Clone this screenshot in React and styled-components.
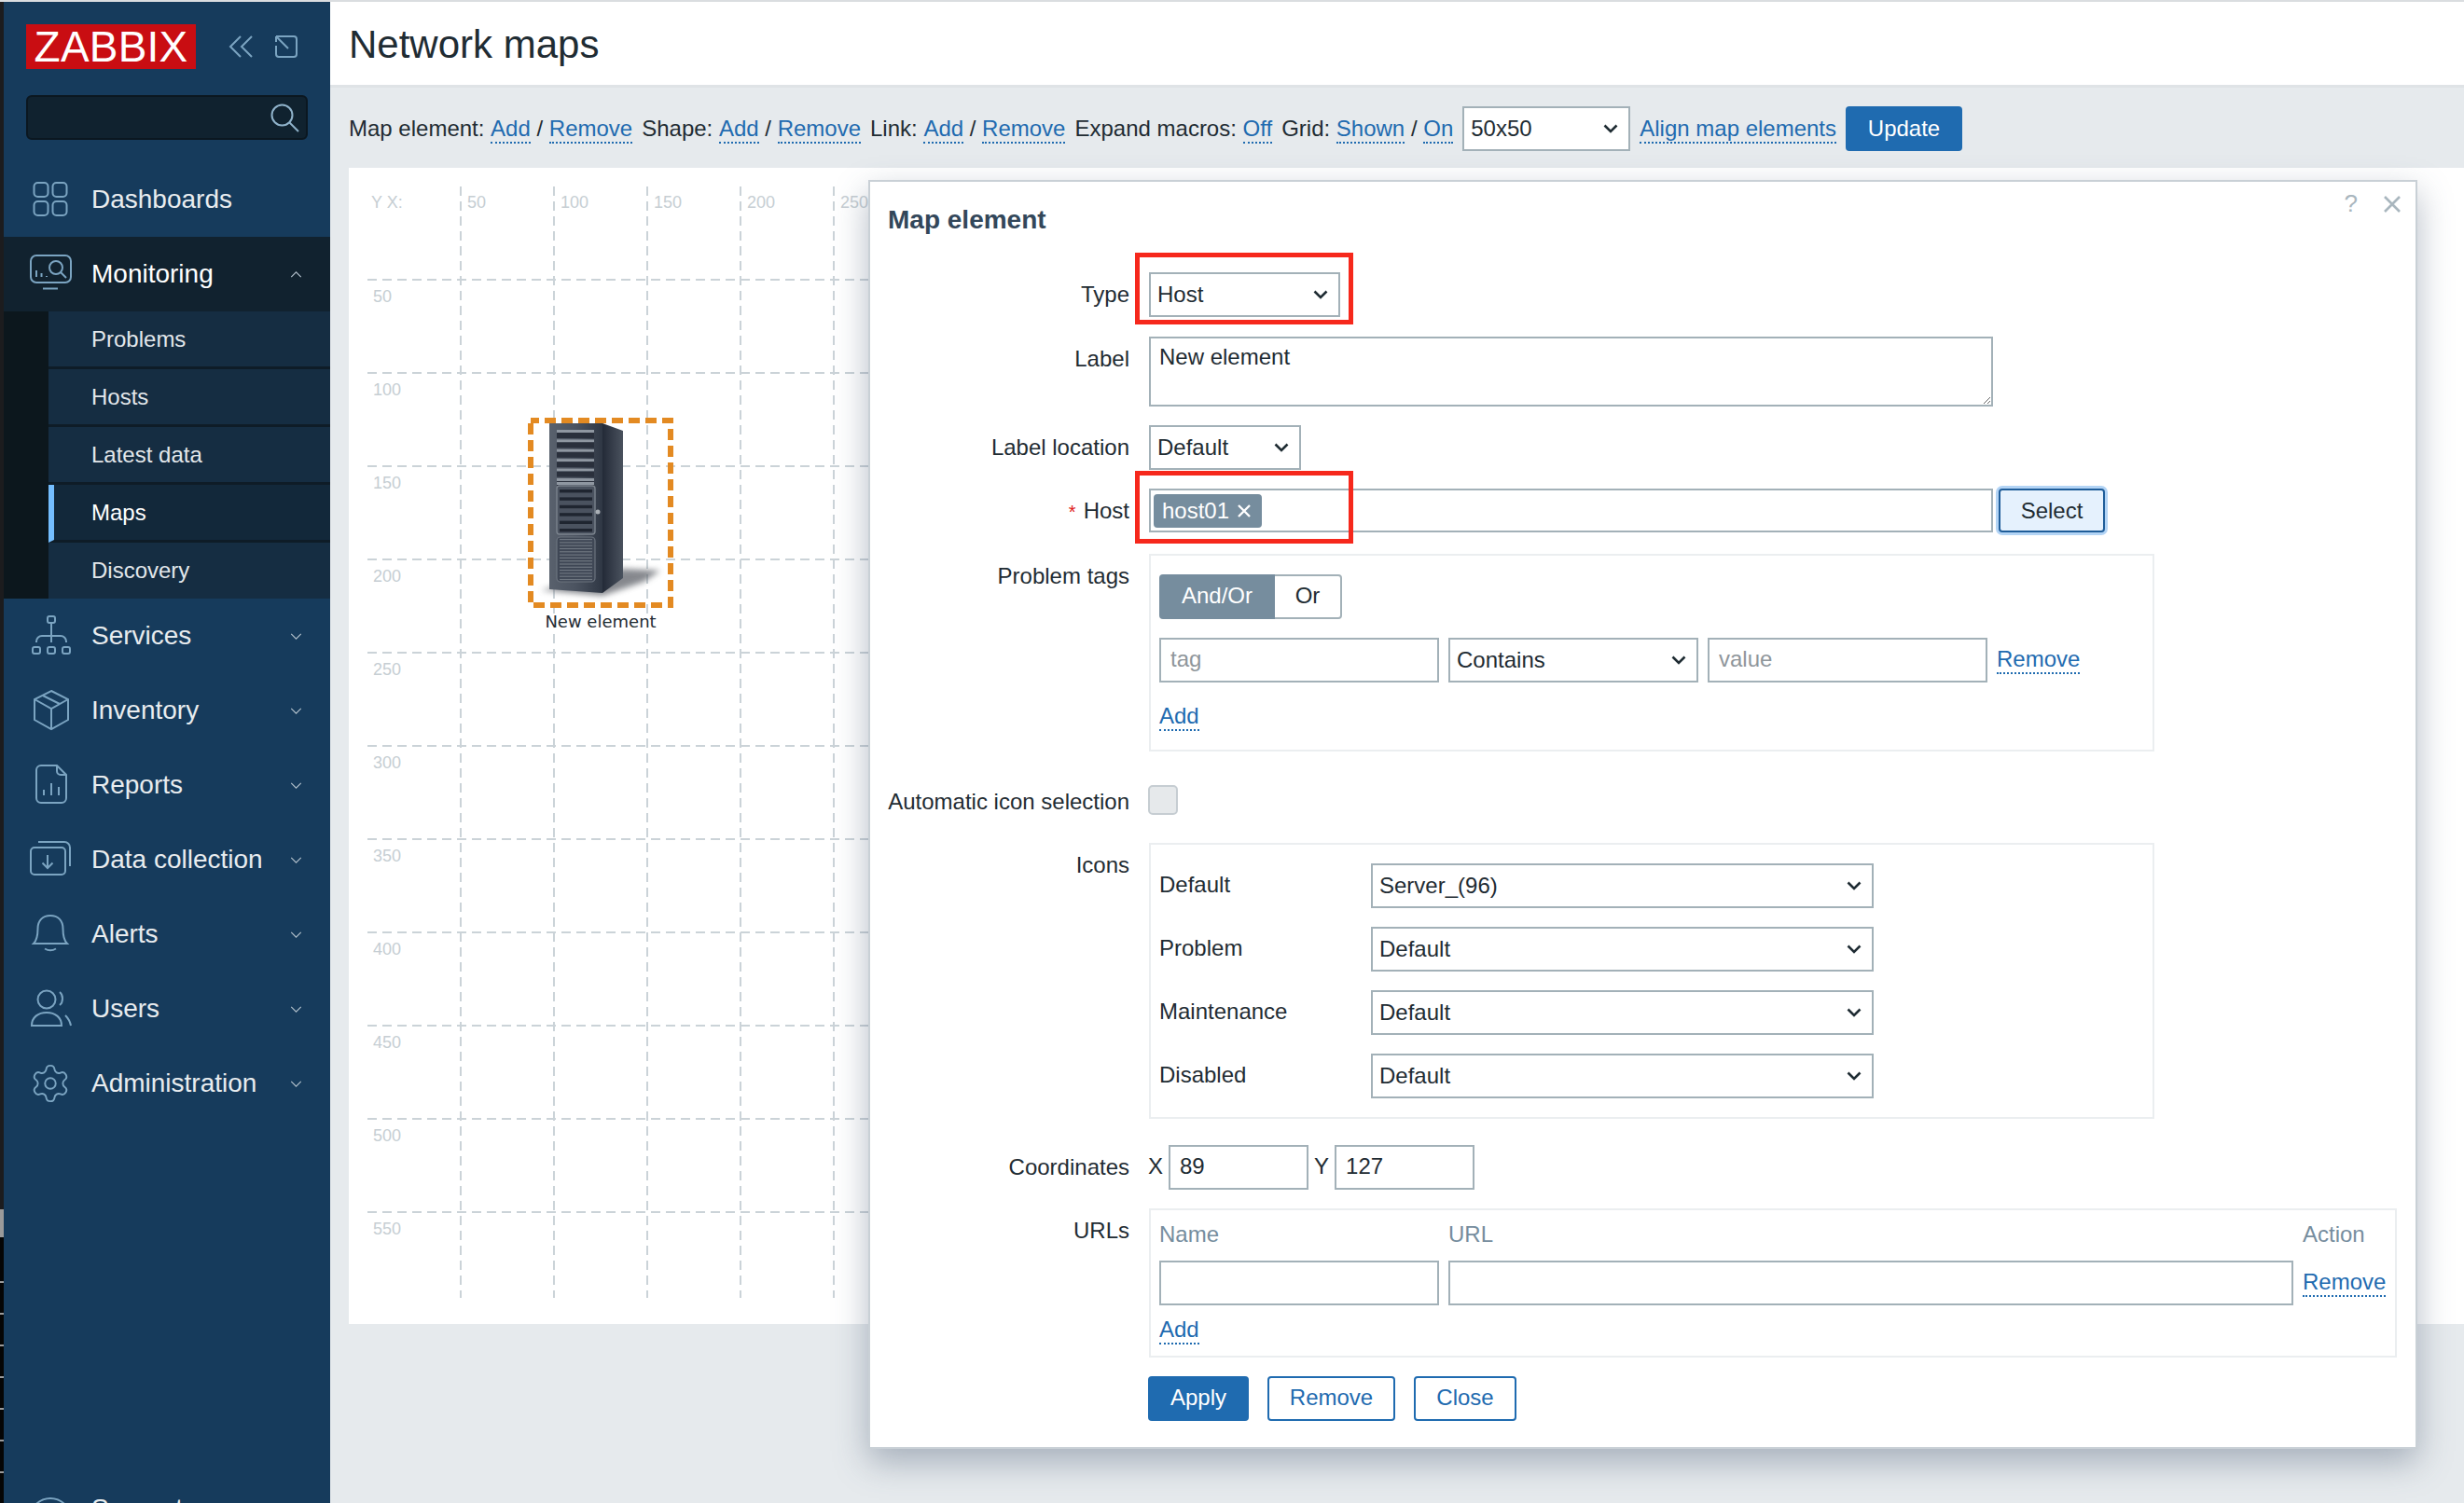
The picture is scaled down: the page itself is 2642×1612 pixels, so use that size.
import React from 'react';
import styled, { createGlobalStyle } from 'styled-components';
import { Settings } from 'lucide-react';

const FONT = '"Liberation Sans", Arial, sans-serif';
const LINK = '#1f6bb0';
const INK = '#1f2c33';
const EDGE = '#a3b1b8';

const Global = createGlobalStyle`
  html, body { margin: 0; padding: 0; width: 2642px; height: 1612px; overflow: hidden; background: #e6eaed; }
  body { font-family: ${FONT}; font-size: 24px; color: ${INK}; }
  * { box-sizing: border-box; }
`;

const Page = styled.div`display: flex; flex-direction: column; width: 2642px; height: 1612px; overflow: hidden;`;
const TopLine = styled.div`height: 2px; background: #dadde0; flex: none;`;
const Shell = styled.div`display: flex; flex: 1; min-height: 0;`;
const Strip = styled.div`
  width: 4px; flex: none; background-color: #050505; background-repeat: no-repeat;
  background-image:
    linear-gradient(#1c1c1e 0, #1c1c1e 1295px, #9a9a9a 1295px, #9a9a9a 1325px, #050505 1325px),
    repeating-linear-gradient(#050505 0, #050505 32px, #9c9c9c 32px, #9c9c9c 34px);
  background-size: 100% 1325px, 100% 250px;
  background-position: 0 0, 0 1340px;
`;

/* Sidebar */
const Sidebar = styled.aside`
  width: 350px; flex: none; background: #163b5c; overflow: hidden;
  display: flex; flex-direction: column; color: #e8ecef;
`;
const BrandRow = styled.div`display: flex; flex: none; align-items: center; padding: 24px 0 0 24px; height: 72px;`;
const Logo = styled.div`
  width: 182px; height: 48px; background: #c90d12; color: #fff; text-align: center; flex: none;
  font-size: 46px; line-height: 49px; letter-spacing: 0.2px;
`;
const BrandIcon = styled.svg`
  flex: none; margin-left: ${p => p.$ml}px; fill: none; stroke: #7ba4c1; stroke-width: 2;
`;
const SearchBox = styled.div`
  position: relative; margin: 28px 0 24px 24px; width: 302px; height: 48px; flex: none;
  background: #10222f; border: 2px solid #0b1720; border-radius: 6px;
  display: flex; align-items: center; justify-content: flex-end; padding-right: 7px;
`;
const SearchGlyph = styled.svg`fill: none; stroke: #8fb2ca; stroke-width: 2;`;
const NavRow = styled.div`
  display: flex; align-items: center; height: 80px; flex: none; padding: 0 30px 0 26px;
  font-size: 28px; margin-top: ${p => p.$mt || 0}px;
  background: ${p => (p.$active ? '#11222f' : 'transparent')};
  color: ${p => (p.$active ? '#fff' : '#e8ecef')};
`;
const NavIconBox = styled.span`
  width: 48px; height: 48px; flex: none; margin-right: 20px; color: #7ba4c1;
  display: flex; align-items: center; justify-content: center;
`;
const NavSvg = styled.svg`width: 48px; height: 48px; fill: none; stroke: currentColor; stroke-width: 2; overflow: visible;`;
const NavText = styled.span`flex: 1; white-space: nowrap;`;
const Caret = styled.svg`width: 13px; height: 7px; fill: none; stroke: #b4c2cd; stroke-width: 1.3;`;
const SubWrap = styled.div`display: flex; flex: none; background: #0c171d;`;
const SubList = styled.div`margin-left: 48px; flex: 1;`;
const SubItem = styled.div`
  height: ${p => (p.$last ? 60 : 62)}px; display: flex; align-items: center;
  padding-left: ${p => (p.$active ? 40 : 46)}px; font-size: 24px;
  background: ${p => (p.$active ? '#12283a' : '#152d42')};
  color: ${p => (p.$active ? '#fff' : '#e2e7eb')};
  border-left: ${p => (p.$active ? '6px solid #74beff' : 'none')};
  border-bottom: ${p => (p.$last ? 'none' : '3px solid #0e1c27')};
`;

/* Main */
const Main = styled.main`flex: 1; position: relative; min-width: 0;`;
const Header = styled.header`
  height: 92px; background: #fff; border-bottom: 3px solid #dfe3e6; padding-left: 20px;
  display: flex; align-items: center;
`;
const Title = styled.h1`margin: 0 0 -2px; font-size: 42px; font-weight: 400; color: ${INK}; line-height: 50px;`;
const Toolbar = styled.div`
  height: 86px; padding: 2px 0 0 20px; display: flex; align-items: center; gap: 10px; white-space: nowrap;
`;
const Group = styled.span`white-space: nowrap; display: inline-block; margin-top: 2px;`;
const DotLink = styled.a`
  display: inline-block; color: ${LINK}; line-height: 28px; border-bottom: 2px dotted ${LINK};
`;
const ChoiceWrap = styled.span`position: relative; display: inline-block; width: ${p => p.$w}px; height: ${p => p.$h || 48}px; flex: none;`;
const Choice = styled.select`
  appearance: none; width: 100%; height: 100%; background: #fff; border: 2px solid ${EDGE}; border-radius: 0;
  font: 24px ${FONT}; color: ${INK}; padding: 0 30px 2px 7px; display: block;
`;
const ChoiceArrow = styled.svg`
  position: absolute; right: 13px; top: 50%; margin-top: -5px; width: 16px; height: 10px; pointer-events: none;
  fill: none; stroke: ${INK}; stroke-width: 2.6;
`;
const Solid = styled.button`
  height: 48px; width: ${p => p.$w}px; border: 0; border-radius: 4px; background: ${LINK}; color: #fff;
  font: 24px ${FONT}; padding: 0 0 ${p => p.$pb}px; flex: none;
`;
const Hollow = styled.button`
  height: 48px; width: ${p => p.$w}px; border: 2px solid ${LINK}; border-radius: 4px; background: #fff; color: ${LINK};
  font: 24px ${FONT}; padding: 0 0 2px; flex: none;
`;

/* Map */
const Canvas = styled.section`margin-left: 20px; height: 1240px; background: #fff; position: relative;`;
const MapSvg = styled.svg`position: absolute; left: 0; top: 0; width: 760px; height: 1240px;`;
const GridLine = styled.line`stroke: #cbd3d8; stroke-width: 2; stroke-dasharray: 10 6;`;
const Tick = styled.text`font: 18px "Liberation Sans", sans-serif; fill: #c6ced3;`;
const NodeLabel = styled.text`
  font: 18px "DejaVu Sans", sans-serif; fill: #1f2c33; text-anchor: middle;
  paint-order: stroke; stroke: rgba(255,255,255,.85); stroke-width: 4px;
`;

/* Dialog */
const Dialog = styled.div`
  position: absolute; left: 577px; top: 191px; width: 1661px; height: 1361px; background: #fff;
  border: 2px solid #c9d0d6; box-shadow: 0 14px 34px rgba(70, 88, 112, .4);
  padding: 21px 0 0 19px;
`;
const DialogTitle = styled.h2`margin: 0; font-size: 28px; font-weight: 700; line-height: 40px; color: #33475a;`;
const DialogTools = styled.div`
  position: absolute; top: 8px; right: 16px; display: flex; align-items: center; gap: 28px; color: #a9b6be; font-size: 26px;
`;
const Form = styled.div`margin-top: 36px;`;
const FormRow = styled.div`
  display: grid; grid-template-columns: 259px 1fr; column-gap: 21px; align-items: start; min-height: 47px;
  margin-top: ${p => (p.$mt === undefined ? 20 : p.$mt)}px;
`;
const FieldLabel = styled.label`text-align: right; line-height: 47px; white-space: nowrap; color: ${INK};`;
const Required = styled.span`color: #e02020; margin-right: 8px; font-size: 20px;`;
const LabelArea = styled.textarea`
  display: block; width: 905px; height: 75px; border: 2px solid ${EDGE}; padding: 5px 9px; margin: 0;
  font: 24px/30px ${FONT}; color: ${INK}; background: #fff; border-radius: 0; outline: none;
`;
const HostLine = styled.div`display: flex; align-items: stretch; gap: 6px; height: 47px;`;
const MultiSelect = styled.div`
  width: 905px; border: 2px solid ${EDGE}; background: #fff; padding: 4px 3px; display: flex; align-items: flex-start;
`;
const Chip = styled.span`
  background: #768d9e; color: #fff; border-radius: 4px; display: inline-flex; align-items: center; gap: 9px;
  padding: 0 7px 0 9px; height: 36px; width: 116px; white-space: nowrap;
`;
const ChipX = styled.svg`width: 14px; height: 14px; stroke: #fff; stroke-width: 2.4; fill: none; flex: none;`;
const FocusButton = styled.button`
  width: 114px; height: 47px; background: #e5f1fd; border: 2px solid #1f5d99; border-radius: 4px;
  box-shadow: 0 0 0 3px #b3d4f5; font: 24px ${FONT}; color: ${INK}; padding: 0;
`;
const Fieldset = styled.div`
  width: ${p => p.$w}px; border: 2px solid #ebeef0; padding: ${p => p.$pad};
`;
const Segment = styled.div`display: flex; height: 48px; width: 196px;`;
const SegOn = styled.span`
  width: 124px; background: #768d9e; color: #fff; border-radius: 4px 0 0 4px; padding-bottom: 2px;
  display: flex; align-items: center; justify-content: center;
`;
const SegOff = styled.span`
  flex: 1; border: 2px solid ${EDGE}; border-left: 0; border-radius: 0 4px 4px 0; padding-bottom: 2px;
  display: flex; align-items: center; justify-content: center;
`;
const TagRow = styled.div`display: flex; align-items: center; gap: 10px; margin-top: 20px;`;
const TextBox = styled.input`
  display: block; width: ${p => p.$w}px; height: 48px; flex: none; border: 2px solid ${EDGE}; border-radius: 0;
  padding: 0 10px 2px; font: 24px ${FONT}; color: ${INK}; background: #fff; margin: 0;
  &::placeholder { color: #8f969b; opacity: 1; }
`;
const AddLine = styled.div`margin-top: ${p => p.$mt}px; height: 30px;`;
const CheckBox = styled.input`
  appearance: none; display: block; margin: 6px 0 0 -1px; width: 32px; height: 32px;
  background: #e6e9eb; border: 2px solid #c6cdd2; border-radius: 5px;
`;
const AutoRow = styled(FormRow)`height: 48px;`;
const IconGrid = styled.div`display: grid; grid-template-columns: 227px 539px; row-gap: 20px; align-items: center;`;
const IconName = styled.span`padding-bottom: 2px;`;
const CoordLine = styled.div`display: flex; align-items: center; gap: 6px; margin-left: -1px; height: 48px;`;
const CoordMark = styled.span`padding-bottom: 2px;`;
const UrlGrid = styled.div`
  display: grid; grid-template-columns: 300px 906px auto; column-gap: 10px; row-gap: 14px; align-items: center;
`;
const ColHead = styled.span`line-height: 28px; color: #768d9e;`;
const Actions = styled.div`display: flex; gap: 20px; margin-left: -1px;`;
const RedFrame = styled.div`
  position: absolute; left: 284px; top: ${p => p.$top}px; width: 234px; height: ${p => p.$h}px;
  border: 5px solid #f6281c; pointer-events: none;
`;

const Down = () => <Caret viewBox="0 0 14 8"><polyline points="1,1 7,7 13,1" /></Caret>;
const Up = () => <Caret viewBox="0 0 14 8"><polyline points="1,7 7,1 13,7" /></Caret>;

const DashIcon = () => (
  <NavSvg viewBox="0 0 48 48">
    <rect x="6.5" y="6" width="15" height="15" rx="4" /><rect x="26.5" y="6" width="15" height="15" rx="4" />
    <rect x="6.5" y="26" width="15" height="15" rx="4" /><rect x="26.5" y="26" width="15" height="15" rx="4" />
  </NavSvg>
);
const MonitorIcon = () => (
  <NavSvg viewBox="0 0 48 48">
    <rect x="3" y="4" width="43" height="29" rx="6" />
    <path d="M16 39.5H32M9 20v7M14.5 23v4M20 26v1" />
    <circle cx="30" cy="17" r="7" /><path d="M35 22l6 6" />
  </NavSvg>
);
const ServicesIcon = () => (
  <NavSvg viewBox="0 0 48 48">
    <rect x="21" y="3" width="8" height="7" rx="2" />
    <path d="M25 10V31M9 31v-1a6 6 0 0 1 6-6H35a6 6 0 0 1 6 6v1" />
    <rect x="5" y="36" width="8" height="7" rx="2" /><rect x="21" y="36" width="8" height="7" rx="2" /><rect x="37" y="36" width="8" height="7" rx="2" />
  </NavSvg>
);
const InventoryIcon = () => (
  <NavSvg viewBox="0 0 48 48">
    <path d="M25 3L43 12V34L25 44L7 34V12Z" /><path d="M7 12L25 22L43 12M25 22V44M16 8L34 17" />
  </NavSvg>
);
const ReportsIcon = () => (
  <NavSvg viewBox="0 0 48 48">
    <path d="M14 3H31L41 13V38a5 5 0 0 1-5 5H14a5 5 0 0 1-5-5V8a5 5 0 0 1 5-5Z" />
    <path d="M31 3V9a4 4 0 0 0 4 4H41M17 35v-6M25 35V22M33 35v-9" />
  </NavSvg>
);
const DataIcon = () => (
  <NavSvg viewBox="0 0 48 48">
    <rect x="3" y="11" width="37" height="29" rx="4" />
    <path d="M11 5H39a6 6 0 0 1 6 6V31M21 19V33M15.5 27.5L21 33L26.5 27.5" />
  </NavSvg>
);
const AlertIcon = () => (
  <NavSvg viewBox="0 0 48 48">
    <path d="M6 34C10 30 10.5 24 10.5 18C10.5 9 16 4 24 4C32 4 37.5 9 37.5 18C37.5 24 38 30 42 34Z" />
    <path d="M18 39.5Q24 43 30 39.5" />
  </NavSvg>
);
const UsersIcon = () => (
  <NavSvg viewBox="0 0 48 48">
    <circle cx="20" cy="14" r="9.5" />
    <path d="M4 42C4 33 11 28 20 28C29 28 36 33 36 42Z" />
    <path d="M34 6C38 9 38 17 34 20M40 31C43 34 45 37 46 42" />
  </NavSvg>
);
const SupportIcon = () => (
  <NavSvg viewBox="0 0 48 48"><circle cx="24" cy="35" r="22" /></NavSvg>
);

const navAfter = [
  ['Services', <ServicesIcon />], ['Inventory', <InventoryIcon />], ['Reports', <ReportsIcon />],
  ['Data collection', <DataIcon />], ['Alerts', <AlertIcon />], ['Users', <UsersIcon />],
  ['Administration', <Settings size={46} strokeWidth={1} />],
];
const subNav = ['Problems', 'Hosts', 'Latest data', 'Maps', 'Discovery'];

const SideNav = () => (
  <Sidebar>
    <BrandRow>
      <Logo>ZABBIX</Logo>
      <BrandIcon $ml={35} width="27" height="24" viewBox="0 0 27 24"><path d="M13 1L2 12L13 23M25 1L14 12L25 23" /></BrandIcon>
      <BrandIcon $ml={22} width="26" height="26" viewBox="0 0 26 26"><path d="M7 2H21a3 3 0 0 1 3 3V21a3 3 0 0 1-3 3H5a3 3 0 0 1-3-3V12M2 2L15 15M2 2V8M2 2H8" /></BrandIcon>
    </BrandRow>
    <SearchBox>
      <SearchGlyph width="32" height="32" viewBox="0 0 32 32"><circle cx="13.5" cy="13.5" r="11" /><path d="M21.5 21.5L31 31" /></SearchGlyph>
    </SearchBox>
    <NavRow><NavIconBox><DashIcon /></NavIconBox><NavText>Dashboards</NavText></NavRow>
    <NavRow $active><NavIconBox><MonitorIcon /></NavIconBox><NavText>Monitoring</NavText><Up /></NavRow>
    <SubWrap>
      <SubList>
        {subNav.map((s, i) => <SubItem key={s} $active={s === 'Maps'} $last={i === subNav.length - 1}>{s}</SubItem>)}
      </SubList>
    </SubWrap>
    {navAfter.map(([name, icon]) => (
      <NavRow key={name}><NavIconBox>{icon}</NavIconBox><NavText>{name}</NavText><Down /></NavRow>
    ))}
    <NavRow $mt={376}><NavIconBox><SupportIcon /></NavIconBox><NavText>Support</NavText></NavRow>
  </Sidebar>
);

const Picker = ({ w, value, options }) => (
  <ChoiceWrap $w={w}>
    <Choice defaultValue={value}>{(options || [value]).map(o => <option key={o}>{o}</option>)}</Choice>
    <ChoiceArrow viewBox="0 0 16 10"><polyline points="1.5,1.5 8,8 14.5,1.5" /></ChoiceArrow>
  </ChoiceWrap>
);

const ServerNode = () => {
  const upper = [0, 1, 2, 3, 4, 5];
  const door = [0, 1, 2, 3, 4, 5];
  const vent = Array.from({ length: 14 }, (_, i) => i);
  return (
    <g transform="translate(166 240)">
      <defs>
        <linearGradient id="front" x1="0" x2="1" y1="0" y2="0">
          <stop offset="0" stopColor="#59616d" /><stop offset=".5" stopColor="#4b5360" /><stop offset="1" stopColor="#2f3744" />
        </linearGradient>
        <linearGradient id="side" x1="0" x2="1" y1="0" y2="0">
          <stop offset="0" stopColor="#232a37" /><stop offset="1" stopColor="#4a525e" />
        </linearGradient>
        <filter id="soft" x="-30%" y="-100%" width="160%" height="300%"><feGaussianBlur stdDeviation="3" /></filter>
      </defs>
      <polygon points="128,190 168,192 150,204 106,219 40,213" fill="#5d6167" opacity=".75" filter="url(#soft)" />
      <polygon points="49,34 106,34 106,216 49,212" fill="url(#front)" />
      <polygon points="106,34 128,42 128,200 106,216" fill="url(#side)" />
      {upper.map(i => (
        <g key={i}>
          <rect x="57" y={41 + i * 10.4} width="40" height="3" fill="#8f97a1" />
          <rect x="57" y={44 + i * 10.4} width="40" height="6" fill="#2a303c" />
        </g>
      ))}
      <rect x="57" y="97" width="40" height="3" fill="#8f97a1" />
      <rect x="57" y="101" width="41" height="52" rx="3" fill="#4a525f" stroke="#7b838d" strokeWidth="1.4" />
      {door.map(i => <rect key={i} x="60" y={105 + i * 8.4} width="35" height="3.4" fill="#1f2530" />)}
      <rect x="57" y="156" width="41" height="48" rx="4" fill="#3f4755" stroke="#6c747f" strokeWidth="1.2" />
      {vent.map(i => <rect key={i} x="60" y={158 + i * 3.3} width="35" height="1.2" fill="#6f7781" />)}
      <circle cx="101" cy="129" r="2.5" fill="#aab0b6" />
      <rect x="29" y="31" width="150" height="198" fill="none" stroke="#e38a22" strokeWidth="6" strokeDasharray="12 6" strokeDashoffset="3" />
    </g>
  );
};

const MapCanvas = () => {
  const xs = [120, 220, 320, 420, 520];
  const ys = [120, 220, 320, 420, 520, 620, 720, 820, 920, 1020, 1120];
  return (
    <Canvas>
      <MapSvg viewBox="0 0 760 1240">
        {xs.map(x => <GridLine key={x} x1={x} x2={x} y1="20" y2="1212" />)}
        {ys.map(y => <GridLine key={y} x1="20" x2="760" y1={y} y2={y} />)}
        <Tick x="24" y="43">Y X:</Tick>
        {xs.map((x, i) => <Tick key={x} x={x + 7} y="43">{(i + 1) * 50}</Tick>)}
        {ys.map((y, i) => <Tick key={y} x="26" y={y + 24}>{(i + 1) * 50}</Tick>)}
        <ServerNode />
        <NodeLabel x="270" y="493">New element</NodeLabel>
      </MapSvg>
    </Canvas>
  );
};

const MapDialog = () => (
  <Dialog>
    <DialogTools>
      <span>?</span>
      <svg width="18" height="18" viewBox="0 0 18 18" fill="none" stroke="#a9b6be" strokeWidth="2.6"><path d="M1 1L17 17M17 1L1 17" /></svg>
    </DialogTools>
    <DialogTitle>Map element</DialogTitle>
    <Form>
      <FormRow $mt={0}><FieldLabel>Type</FieldLabel><div><Picker w={205} value="Host" /></div></FormRow>
      <FormRow $mt={21}><FieldLabel>Label</FieldLabel><LabelArea defaultValue="New element" /></FormRow>
      <FormRow><FieldLabel>Label location</FieldLabel><div><Picker w={163} value="Default" /></div></FormRow>
      <FormRow>
        <FieldLabel><Required>*</Required>Host</FieldLabel>
        <HostLine>
          <MultiSelect>
            <Chip>host01<ChipX viewBox="0 0 14 14"><path d="M1 1L13 13M13 1L1 13" /></ChipX></Chip>
          </MultiSelect>
          <FocusButton>Select</FocusButton>
        </HostLine>
      </FormRow>
      <FormRow $mt={21}>
        <FieldLabel>Problem tags</FieldLabel>
        <Fieldset $w={1078} $pad="20px 9px 20px">
          <Segment><SegOn>And/Or</SegOn><SegOff>Or</SegOff></Segment>
          <TagRow>
            <TextBox $w={300} placeholder="tag" />
            <Picker w={268} value="Contains" />
            <TextBox $w={300} placeholder="value" />
            <DotLink>Remove</DotLink>
          </TagRow>
          <AddLine $mt={22}><DotLink>Add</DotLink></AddLine>
        </Fieldset>
      </FormRow>
      <AutoRow $mt={30}>
        <FieldLabel>Automatic icon selection</FieldLabel>
        <CheckBox type="checkbox" />
      </AutoRow>
      <FormRow>
        <FieldLabel>Icons</FieldLabel>
        <Fieldset $w={1078} $pad="20px 9px">
          <IconGrid>
            <IconName>Default</IconName><Picker w={539} value="Server_(96)" />
            <IconName>Problem</IconName><Picker w={539} value="Default" />
            <IconName>Maintenance</IconName><Picker w={539} value="Default" />
            <IconName>Disabled</IconName><Picker w={539} value="Default" />
          </IconGrid>
        </Fieldset>
      </FormRow>
      <FormRow $mt={28}>
        <FieldLabel>Coordinates</FieldLabel>
        <CoordLine>
          <CoordMark>X</CoordMark><TextBox $w={150} defaultValue="89" />
          <CoordMark>Y</CoordMark><TextBox $w={150} defaultValue="127" />
        </CoordLine>
      </FormRow>
      <FormRow>
        <FieldLabel>URLs</FieldLabel>
        <Fieldset $w={1338} $pad="12px 9px 12px">
          <UrlGrid>
            <ColHead>Name</ColHead><ColHead>URL</ColHead><ColHead>Action</ColHead>
            <TextBox $w={300} /><TextBox $w={906} /><span><DotLink>Remove</DotLink></span>
          </UrlGrid>
          <AddLine $mt={12}><DotLink>Add</DotLink></AddLine>
        </Fieldset>
      </FormRow>
      <FormRow>
        <span />
        <Actions>
          <Solid $w={108} $pb={2}>Apply</Solid>
          <Hollow $w={137}>Remove</Hollow>
          <Hollow $w={110}>Close</Hollow>
        </Actions>
      </FormRow>
    </Form>
    <RedFrame $top={76} $h={77} />
    <RedFrame $top={310} $h={78} />
  </Dialog>
);

export default function App() {
  return (
    <Page>
      <Global />
      <TopLine />
      <Shell>
        <Strip />
        <SideNav />
        <Main>
          <Header><Title>Network maps</Title></Header>
          <Toolbar>
            <Group>Map element: <DotLink>Add</DotLink> / <DotLink>Remove</DotLink></Group>
            <Group>Shape: <DotLink>Add</DotLink> / <DotLink>Remove</DotLink></Group>
            <Group>Link: <DotLink>Add</DotLink> / <DotLink>Remove</DotLink></Group>
            <Group>Expand macros: <DotLink>Off</DotLink></Group>
            <Group>Grid: <DotLink>Shown</DotLink> / <DotLink>On</DotLink></Group>
            <Picker w={180} value="50x50" />
            <Group><DotLink>Align map elements</DotLink></Group>
            <Solid $w={125} $pb={0}>Update</Solid>
          </Toolbar>
          <MapCanvas />
          <MapDialog />
        </Main>
      </Shell>
    </Page>
  );
}
